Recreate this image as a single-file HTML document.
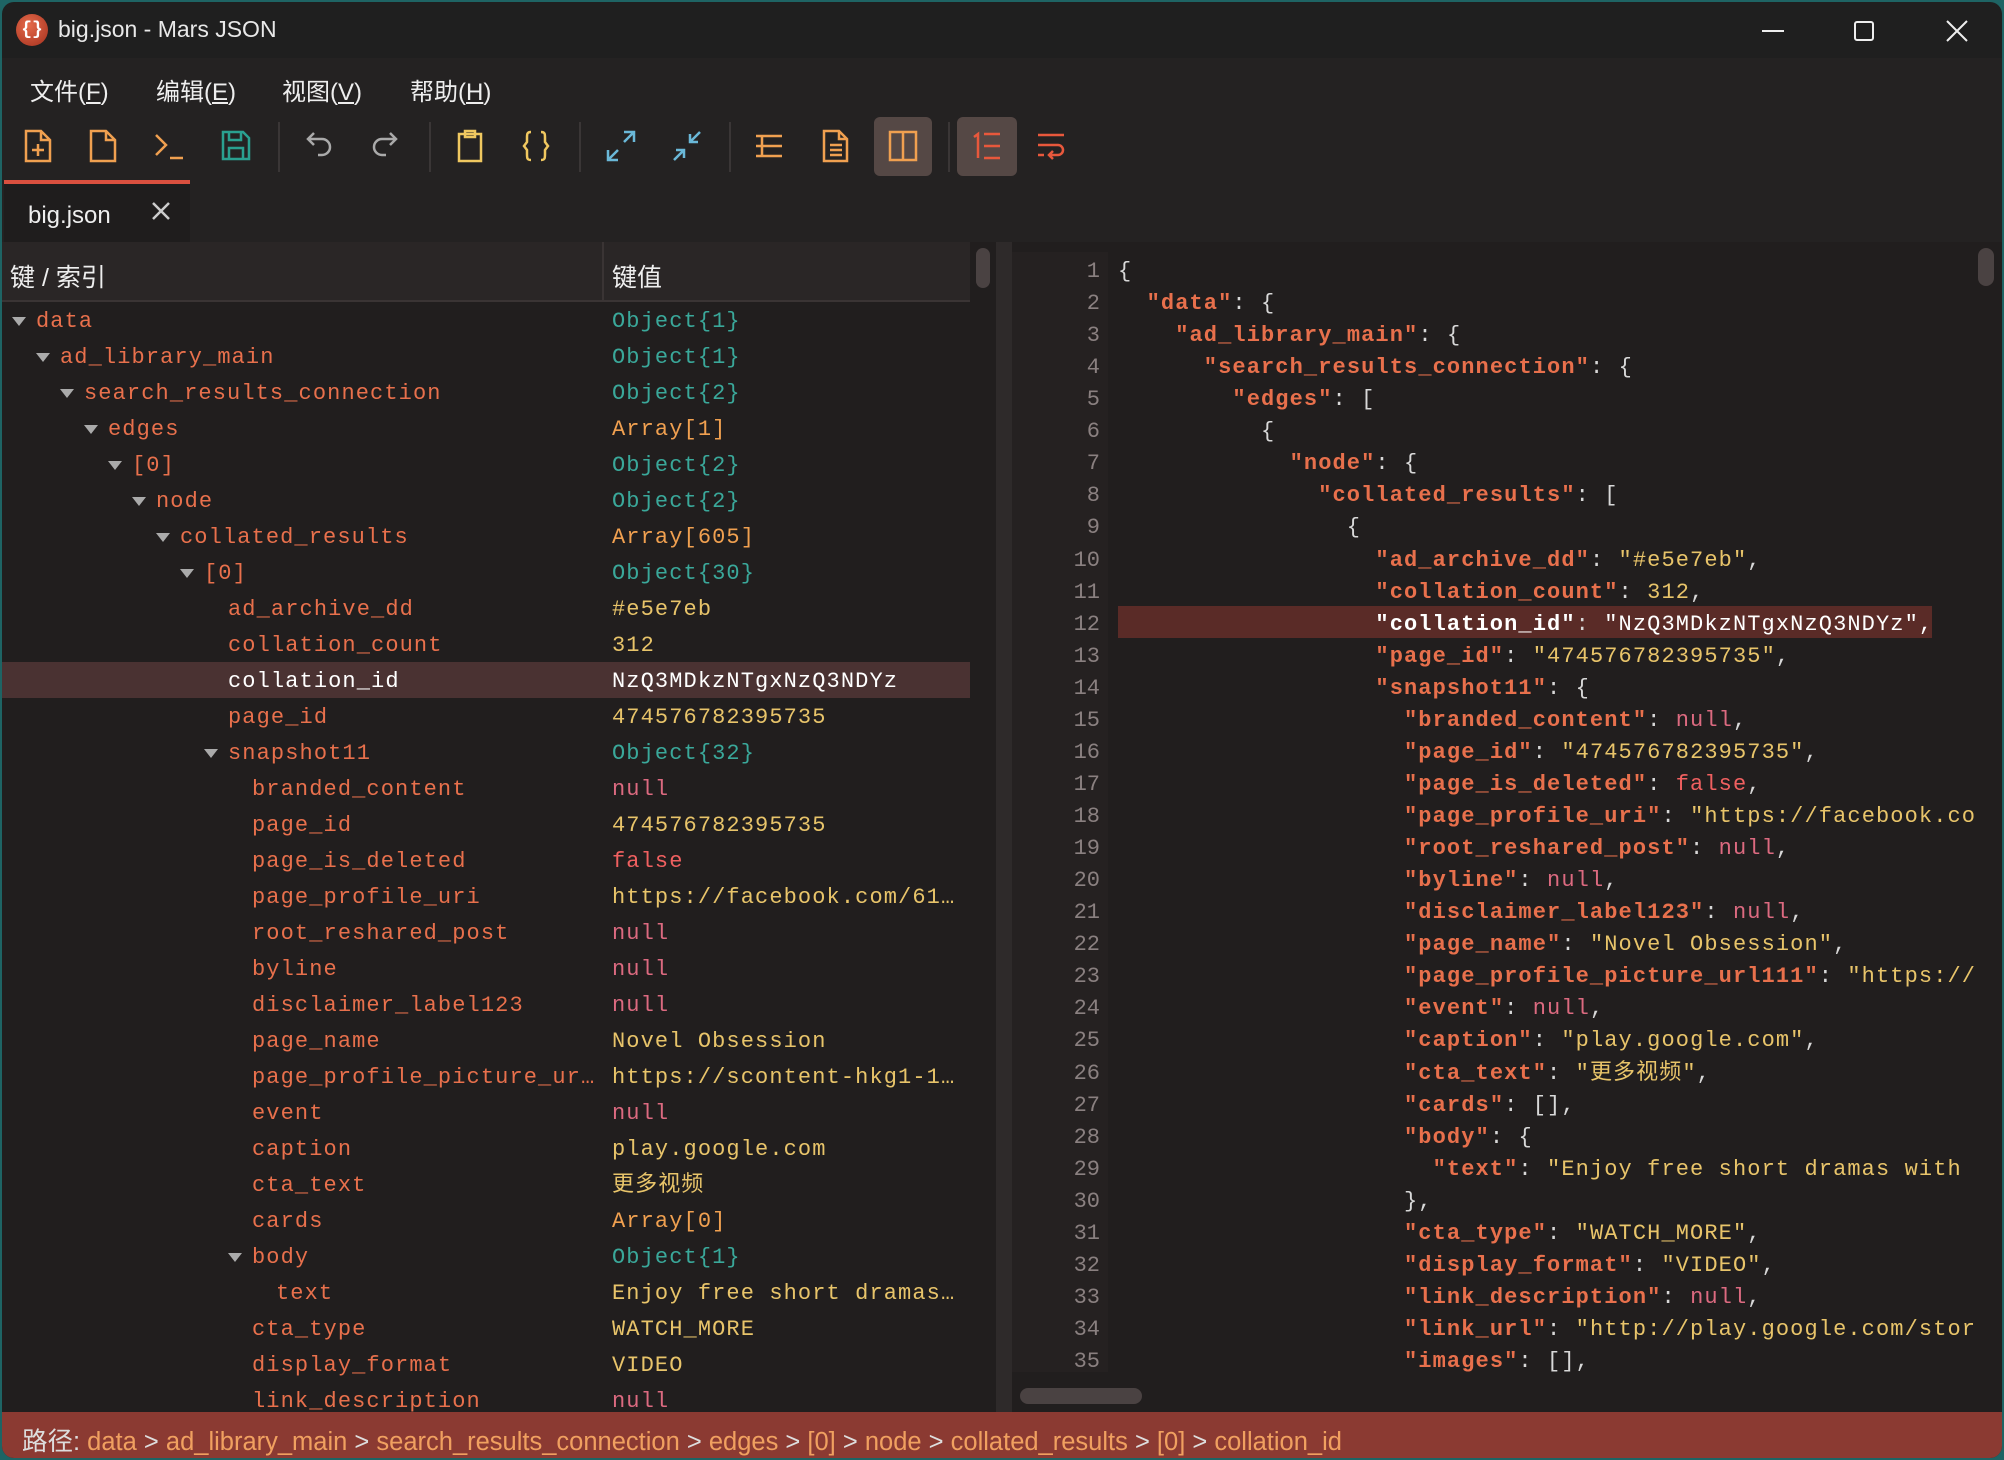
<!DOCTYPE html>
<html><head><meta charset="utf-8"><style>
*{margin:0;padding:0;box-sizing:border-box}
body{width:2004px;height:1460px;background:#1e6464;overflow:hidden;font-family:"Liberation Sans","Noto Sans CJK SC",sans-serif;position:relative}
#win{position:absolute;left:2px;top:2px;width:2000px;height:1456px;background:#1f1f1f;border-radius:12px;overflow:hidden}
.abs{position:absolute}
.mono{font-family:"Liberation Mono","Noto Sans CJK SC",monospace;font-size:22px;letter-spacing:1.1px;white-space:pre;line-height:28px}
.mono .abs{line-height:28px;height:28px}
.k{color:#e8704c}.s{color:#e8c46a}.o{color:#3aa89a}.a{color:#f0a050}.n{color:#dc6a80}.f{color:#f06060}.p{color:#d8d8d8}
.code .k{font-weight:bold}
.ico{position:absolute;top:127px}
</style></head><body><div id="win">
<div class="abs" style="left:14px;top:12px;width:32px;height:32px;border-radius:50%;background:radial-gradient(circle at 40% 35%,#e56a4a,#a3301e);color:#fff;font:bold 18px 'Liberation Mono';text-align:center;line-height:32px">{}</div>
<div class="abs" style="left:56px;top:14px;color:#e8e8e8;font-size:23px">big.json - Mars JSON</div>
<div class="abs" style="left:1760px;top:28px;width:22px;height:2px;background:#eee"></div>
<div class="abs" style="left:1852px;top:19px;width:20px;height:20px;border:2px solid #eee;border-radius:3px"></div>
<svg class="abs" style="left:1944px;top:18px" width="22" height="22"><path d="M1 1L21 21M21 1L1 21" stroke="#eee" stroke-width="2"/></svg>
<div class="abs" style="left:0;top:56px;width:2000px;height:54px;background:#242222"></div>
<div class="abs" style="left:28px;top:70px;color:#eee;font-size:24px">文件(<u>F</u>)</div>
<div class="abs" style="left:154px;top:70px;color:#eee;font-size:24px">编辑(<u>E</u>)</div>
<div class="abs" style="left:280px;top:70px;color:#eee;font-size:24px">视图(<u>V</u>)</div>
<div class="abs" style="left:408px;top:70px;color:#eee;font-size:24px">帮助(<u>H</u>)</div>
<div class="abs" style="left:0;top:110px;width:2000px;height:68px;background:#242222"></div>
<div class="abs" style="left:872px;top:115px;width:58px;height:59px;background:#554845;border-radius:6px"></div>
<div class="abs" style="left:955px;top:115px;width:60px;height:59px;background:#554845;border-radius:6px"></div>
<div class="abs" style="left:276px;top:120px;width:2px;height:50px;background:#3a3636"></div>
<div class="abs" style="left:427px;top:120px;width:2px;height:50px;background:#3a3636"></div>
<div class="abs" style="left:577px;top:120px;width:2px;height:50px;background:#3a3636"></div>
<div class="abs" style="left:727px;top:120px;width:2px;height:50px;background:#3a3636"></div>
<div class="abs" style="left:946px;top:120px;width:2px;height:50px;background:#3a3636"></div>
<svg class="ico" style="left:20px" width="32" height="34" fill="none" stroke="#f0a050" stroke-width="2.5"><path d="M4 2h15l9 9v21H4z M19 2v9h9 M16 15v12 M10 21h12"/></svg>
<svg class="ico" style="left:85px" width="32" height="34" fill="none" stroke="#f0a050" stroke-width="2.5"><path d="M4 2h15l9 9v21H4z M19 2v9h9"/></svg>
<svg class="ico" style="left:152px" width="32" height="34" fill="none" stroke="#f0a050" stroke-width="2.5"><path d="M2 6l10 10-10 10 M16 29h13"/></svg>
<svg class="ico" style="left:218px" width="32" height="34" fill="none" stroke="#2aa090" stroke-width="2.5"><path d="M3 3h20l6 6v21H3z M9 3v8h12V3 M9 30V19h14v11"/></svg>
<svg class="ico" style="left:302px" width="32" height="34" fill="none" stroke="#aaa" stroke-width="2.5"><path d="M10 4L4 10l6 6 M4 10h14a8 8 0 010 16h-4"/></svg>
<svg class="ico" style="left:366px" width="32" height="34" fill="none" stroke="#aaa" stroke-width="2.5"><path d="M22 4l6 6-6 6 M28 10H14a8 8 0 000 16h4"/></svg>
<svg class="ico" style="left:452px" width="32" height="34" fill="none" stroke="#f0c860" stroke-width="2.5"><path d="M5 5h22v27H5z M11 2h10v6H11z"/></svg>
<svg class="ico" style="left:518px" width="32" height="34" fill="none" stroke="#f0c860" stroke-width="2.5"><path d="M11 3c-4 0-4 2-4 6v4l-3 4 3 4v4c0 4 0 6 4 6 M21 3c4 0 4 2 4 6v4l3 4-3 4v4c0 4 0 6-4 6"/></svg>
<svg class="ico" style="left:603px" width="32" height="34" fill="none" stroke="#6ab8d8" stroke-width="2.5"><path d="M19 3h10v10 M29 3L19 13 M3 21v10h10 M3 31l10-10"/></svg>
<svg class="ico" style="left:669px" width="32" height="34" fill="none" stroke="#6ab8d8" stroke-width="2.5"><path d="M29 3L19 13 M19 5v8h8 M3 31l10-10 M5 21h8v8"/></svg>
<svg class="ico" style="left:751px" width="32" height="34" fill="none" stroke="#f0a050" stroke-width="2.5"><path d="M3 7h26 M3 17h26 M3 27h26 M9 7v20"/></svg>
<svg class="ico" style="left:817px" width="32" height="34" fill="none" stroke="#f0a050" stroke-width="2.5"><path d="M5 2h15l8 8v22H5z M20 2v8h8 M11 16h12 M11 21h12 M11 26h12"/></svg>
<svg class="ico" style="left:885px" width="32" height="34" fill="none" stroke="#f0a050" stroke-width="2.5"><path d="M3 3h26v28H3z M16 3v28"/></svg>
<svg class="ico" style="left:969px" width="32" height="34" fill="none" stroke="#e8583c" stroke-width="2.5"><path d="M3 8l4-3v24 M13 5h16 M13 17h16 M13 29h16"/></svg>
<svg class="ico" style="left:1033px" width="32" height="34" fill="none" stroke="#e8583c" stroke-width="2.5"><path d="M3 6h26 M3 16h20a5 5 0 010 10h-8 M18 22l-4 4 4 4 M3 26h6"/></svg>
<div class="abs" style="left:0;top:178px;width:2000px;height:62px;background:#242222"></div>
<div class="abs" style="left:2px;top:178px;width:186px;height:62px;background:#1f1d1d;border-top:4px solid #d9503f"></div>
<div class="abs" style="left:26px;top:200px;color:#eee;font-size:24px">big.json</div>
<svg class="abs" style="left:150px;top:200px" width="18" height="18"><path d="M1 1L17 17M17 1L1 17" stroke="#ccc" stroke-width="2.5"/></svg>
<div class="abs" style="left:0;top:240px;width:996px;height:1170px;background:#211e1e"></div>
<div class="abs" style="left:0;top:240px;width:968px;height:60px;background:#2a2626;border-bottom:2px solid #3a3434"></div>
<div class="abs" style="left:600px;top:240px;width:2px;height:60px;background:#3a3434"></div>
<div class="abs" style="left:8px;top:256px;color:#eee;font-size:25px">键 / 索引</div>
<div class="abs" style="left:610px;top:256px;color:#eee;font-size:25px">键值</div>
<div class="abs" style="left:974px;top:246px;width:14px;height:40px;background:#4a4242;border-radius:7px"></div>
<div class="abs" style="left:994px;top:240px;width:16px;height:1170px;background:#2e2a2a"></div>
<div class="abs" style="left:0;top:660px;width:968px;height:36px;background:#4a3232"></div>
<div id="tree" class="mono"></div>
<div class="abs" style="left:1010px;top:240px;width:990px;height:1170px;background:#211e1e"></div>
<div class="abs" style="left:1010px;top:250px;width:96px;height:1120px;background:#252121"></div>
<div class="abs" style="left:1116px;top:604px;width:814px;height:32px;background:#5a2b27"></div>
<div class="abs" style="left:1976px;top:246px;width:16px;height:38px;background:#4a4242;border-radius:8px"></div>
<div class="abs" style="left:1018px;top:1386px;width:122px;height:16px;background:#4a4242;border-radius:8px"></div>
<div id="code" class="mono code"></div>
<div class="abs" style="left:0;top:1410px;width:2000px;height:46px;background:#8b3a32"></div>
<div class="abs" style="left:20px;top:1419px;font-size:25.5px;color:#f0a060;white-space:pre"><span style="color:#ddd">路径:</span> data <span style="color:#ddd">&gt;</span> ad_library_main <span style="color:#ddd">&gt;</span> search_results_connection <span style="color:#ddd">&gt;</span> edges <span style="color:#ddd">&gt;</span> [0] <span style="color:#ddd">&gt;</span> node <span style="color:#ddd">&gt;</span> collated_results <span style="color:#ddd">&gt;</span> [0] <span style="color:#ddd">&gt;</span> collation_id</div>
</div>
<script>
const T=[[0,1,'data','o','Object{1}'],[1,1,'ad_library_main','o','Object{1}'],[2,1,'search_results_connection','o','Object{2}'],[3,1,'edges','a','Array[1]'],[4,1,'[0]','o','Object{2}'],[5,1,'node','o','Object{2}'],[6,1,'collated_results','a','Array[605]'],[7,1,'[0]','o','Object{30}'],[8,0,'ad_archive_dd','s','#e5e7eb'],[8,0,'collation_count','s','312'],[8,0,'collation_id','w','NzQ3MDkzNTgxNzQ3NDYz'],[8,0,'page_id','s','474576782395735'],[8,1,'snapshot11','o','Object{32}'],[9,0,'branded_content','n','null'],[9,0,'page_id','s','474576782395735'],[9,0,'page_is_deleted','f','false'],[9,0,'page_profile_uri','s','https://facebook.com/61…'],[9,0,'root_reshared_post','n','null'],[9,0,'byline','n','null'],[9,0,'disclaimer_label123','n','null'],[9,0,'page_name','s','Novel Obsession'],[9,0,'page_profile_picture_ur…','s','https://scontent-hkg1-1…'],[9,0,'event','n','null'],[9,0,'caption','s','play.google.com'],[9,0,'cta_text','s','更多视频'],[9,0,'cards','a','Array[0]'],[9,1,'body','o','Object{1}'],[10,0,'text','s','Enjoy free short dramas…'],[9,0,'cta_type','s','WATCH_MORE'],[9,0,'display_format','s','VIDEO'],[9,0,'link_description','n','null']];
let h='';T.forEach((r,i)=>{const y=302+i*36;const x=34+r[0]*24;const sel=r[3]=='w';
if(r[1])h+=`<div class="abs" style="left:${x-24}px;top:${y+13}px;width:0;height:0!important;border-left:7px solid transparent;border-right:7px solid transparent;border-top:9px solid #aaa"></div>`;
h+=`<div class="abs ${sel?'':'k'}" style="left:${x}px;top:${y+4}px;${sel?'color:#fff':''}">${r[2]}</div><div class="abs" style="left:610px;top:${y+4}px;${sel?'color:#fff':''}"><span ${sel?'':'class="'+r[3]+'"'}>${r[4]}</span></div>`;});
document.getElementById('tree').innerHTML=h;
const K=(k,w)=>`<span class="k"${w?' style="color:#fff"':''}>"${k}"</span><span class="p">: </span>`;
const S=v=>`<span class="s">"${v}"</span>`;
const C=[[0,'<span class="p">{</span>'],[2,K('data')+'<span class="p">{</span>'],[4,K('ad_library_main')+'<span class="p">{</span>'],[6,K('search_results_connection')+'<span class="p">{</span>'],[8,K('edges')+'<span class="p">[</span>'],[10,'<span class="p">{</span>'],[12,K('node')+'<span class="p">{</span>'],[14,K('collated_results')+'<span class="p">[</span>'],[16,'<span class="p">{</span>'],
[18,K('ad_archive_dd')+S('#e5e7eb')+'<span class="p">,</span>'],[18,K('collation_count')+'<span class="s">312</span><span class="p">,</span>'],[18,K('collation_id',1)+'<span style="color:#fff">"NzQ3MDkzNTgxNzQ3NDYz",</span>'],[18,K('page_id')+S('474576782395735')+'<span class="p">,</span>'],[18,K('snapshot11')+'<span class="p">{</span>'],
[20,K('branded_content')+'<span class="n">null</span><span class="p">,</span>'],[20,K('page_id')+S('474576782395735')+'<span class="p">,</span>'],[20,K('page_is_deleted')+'<span class="f">false</span><span class="p">,</span>'],[20,K('page_profile_uri')+'<span class="s">"https://facebook.co</span>'],[20,K('root_reshared_post')+'<span class="n">null</span><span class="p">,</span>'],[20,K('byline')+'<span class="n">null</span><span class="p">,</span>'],[20,K('disclaimer_label123')+'<span class="n">null</span><span class="p">,</span>'],[20,K('page_name')+S('Novel Obsession')+'<span class="p">,</span>'],[20,K('page_profile_picture_url111')+'<span class="s">"https://</span>'],[20,K('event')+'<span class="n">null</span><span class="p">,</span>'],[20,K('caption')+S('play.google.com')+'<span class="p">,</span>'],[20,K('cta_text')+S('更多视频')+'<span class="p">,</span>'],[20,K('cards')+'<span class="p">[],</span>'],[20,K('body')+'<span class="p">{</span>'],[22,K('text')+'<span class="s">"Enjoy free short dramas with</span>'],[20,'<span class="p">},</span>'],[20,K('cta_type')+S('WATCH_MORE')+'<span class="p">,</span>'],[20,K('display_format')+S('VIDEO')+'<span class="p">,</span>'],[20,K('link_description')+'<span class="n">null</span><span class="p">,</span>'],[20,K('link_url')+'<span class="s">"http://play.google.com/stor</span>'],[20,K('images')+'<span class="p">[],</span>']];
let c='';C.forEach((l,i)=>{const y=256+i*32.06;c+=`<div class="abs" style="left:1010px;width:88px;text-align:right;top:${y}px;color:#8a8080;letter-spacing:0">${i+1}</div><div class="abs" style="left:${1116+l[0]*14.3}px;top:${y}px;max-width:${1972-1116-l[0]*14.3}px;overflow:hidden">${l[1]}</div>`;});
document.getElementById('code').innerHTML=c;
</script>
</body></html>
